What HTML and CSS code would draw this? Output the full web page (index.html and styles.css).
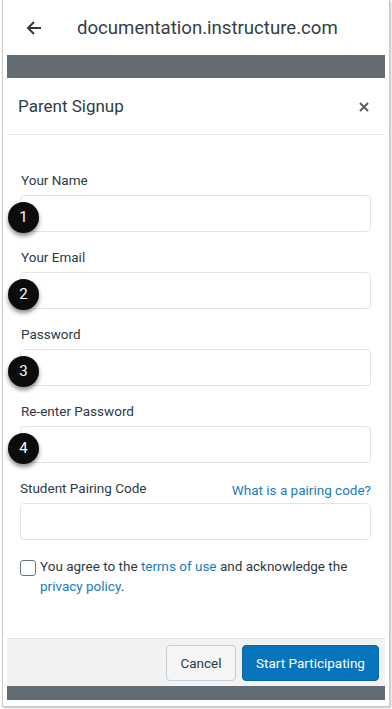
FILE: index.html
```html
<!DOCTYPE html>
<html>
<head>
<meta charset="utf-8">
<link rel="stylesheet" href="styles.css">
</head>
<body>
<div class="frame">
  <div class="topbar">
    <svg class="back" width="16" height="16" viewBox="0 0 16 16"><path d="M15 8H2M8 2L2 8l6 6" fill="none" stroke="#2f3a42" stroke-width="2"/></svg>
    <span class="url">documentation.instructure.com</span>
  </div>
  <div class="page">
    <div class="graybar"></div>
    <div class="modal-head">
      <span class="title">Parent Signup</span>
      <svg class="close" width="10" height="10" viewBox="0 0 10 10"><path d="M1 1L9 9M9 1L1 9" stroke="#555f66" stroke-width="2"/></svg>
    </div>
    <div class="form">
      <div class="field">
        <div class="label">Your Name</div>
        <div class="input"><span class="badge">1</span></div>
      </div>
      <div class="field">
        <div class="label">Your Email</div>
        <div class="input"><span class="badge">2</span></div>
      </div>
      <div class="field">
        <div class="label">Password</div>
        <div class="input"><span class="badge">3</span></div>
      </div>
      <div class="field">
        <div class="label">Re-enter Password</div>
        <div class="input"><span class="badge">4</span></div>
      </div>
      <div class="field">
        <div class="label row"><span>Student Pairing Code</span><span class="link">What is a pairing code?</span></div>
        <div class="input"></div>
      </div>
      <div class="agree">
        <span class="checkbox"></span>
        <span class="agree-text">You agree to the <span class="link">terms of use</span> and acknowledge the <span class="link">privacy policy</span>.</span>
      </div>
    </div>
    <div class="footer">
      <span class="btn cancel">Cancel</span>
      <span class="btn primary">Start Participating</span>
    </div>
    <div class="darkbar"></div>
  </div>
</div>
</body>
</html>
```
FILE: styles.css
```css
html, body {
  margin: 0;
  padding: 0;
  background: #fff;
}
body {
  width: 392px;
  height: 709px;
  overflow: hidden;
  font-family: Roboto, "Noto Sans", sans-serif;
  color: #2d3b45;
}
.frame {
  margin-left: 2px;
  width: 388px;
  height: 707px;
  box-sizing: border-box;
  border: 1px solid #c9c9c9;
  border-top: none;
  box-shadow: 1px 1px 2px rgba(0,0,0,0.25);
  background: #fff;
}
.topbar {
  height: 55px;
  display: flex;
  align-items: center;
  padding-left: 23px;
}
.back {
  display: block;
}
.url {
  margin-left: 35px;
  font-size: 18.6px;
  color: #333e46;
}
.page {
  margin-left: 4px;
  width: 378px;
}
.graybar {
  height: 23px;
  background: #636d75;
}
.modal-head {
  height: 56px;
  border-bottom: 1px solid #e4e6e8;
  display: flex;
  align-items: center;
  justify-content: space-between;
  padding: 0 16px 0 11px;
}
.title {
  font-size: 17px;
  color: #2d3b45;
}
.close {
  display: block;
  margin-top: 2px;
}
.form {
  padding: 36px 14px 0 13px;
  height: 503px;
  box-sizing: border-box;
}
.field {
  margin-bottom: 16px;
}
.label {
  font-size: 13.5px;
  line-height: 18px;
  height: 18px;
  margin-bottom: 6px;
  padding-left: 1px;
  color: #2d3b45;
}
.label.row {
  display: flex;
  justify-content: space-between;
  align-items: flex-end;
  padding-left: 0;
}
.label.row .link {
  font-size: 13.5px;
  position: relative;
  top: 2px;
}
.input {
  position: relative;
  height: 37px;
  box-sizing: border-box;
  border: 1px solid #e2e5e8;
  border-radius: 4px;
  background: #fff;
}
.badge {
  position: absolute;
  left: -13px;
  top: 6px;
  width: 31px;
  height: 31px;
  border-radius: 50%;
  background: #0c0c0c;
  color: #fff;
  font-size: 15px;
  line-height: 31px;
  text-align: center;
  box-shadow: 0 3px 4px rgba(0,0,0,0.45);
}
.link {
  color: #1b7bc0;
}
.agree {
  display: flex;
  align-items: flex-start;
  margin-top: 9px;
}
.checkbox {
  flex: none;
  width: 14px;
  height: 14px;
  border: 1px solid #6b7780;
  border-radius: 3px;
  margin-top: 4px;
  background: #fff;
}
.agree-text {
  margin-left: 4px;
  font-size: 13.5px;
  line-height: 20px;
  color: #2d3b45;
}
.footer {
  height: 47px;
  border-top: 1px solid #e6e6e6;
  background: #f2f2f2;
  display: flex;
  justify-content: flex-end;
  align-items: center;
  gap: 6px;
  padding-right: 6px;
}
.btn {
  height: 36px;
  box-sizing: border-box;
  border-radius: 4px;
  display: flex;
  align-items: center;
  justify-content: center;
  font-size: 13.5px;
}
.cancel {
  width: 70px;
  background: #f5f5f5;
  border: 1px solid #c7cdd1;
  color: #2d3b45;
}
.primary {
  width: 137px;
  background: #0774bb;
  border: 1px solid #0668a8;
  color: #fff;
}
.darkbar {
  height: 14px;
  background: #626c74;
}
```
